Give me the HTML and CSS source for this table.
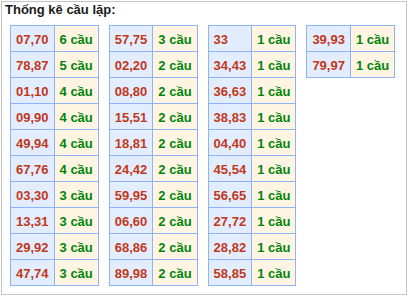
FILE: index.html
```html
<!DOCTYPE html>
<html>
<head>
<meta charset="utf-8">
<link rel="stylesheet" href="styles.css">
</head>
<body>
<div class="box">
  <div class="title">Thống kê cầu lặp:</div>
  <div class="tables">
    <table class="tk">
      <tr><td class="num">07,70</td><td class="cnt">6 cầu</td></tr>
      <tr><td class="num">78,87</td><td class="cnt">5 cầu</td></tr>
      <tr><td class="num">01,10</td><td class="cnt">4 cầu</td></tr>
      <tr><td class="num">09,90</td><td class="cnt">4 cầu</td></tr>
      <tr><td class="num">49,94</td><td class="cnt">4 cầu</td></tr>
      <tr><td class="num">67,76</td><td class="cnt">4 cầu</td></tr>
      <tr><td class="num">03,30</td><td class="cnt">3 cầu</td></tr>
      <tr><td class="num">13,31</td><td class="cnt">3 cầu</td></tr>
      <tr><td class="num">29,92</td><td class="cnt">3 cầu</td></tr>
      <tr><td class="num">47,74</td><td class="cnt">3 cầu</td></tr>
    </table>
    <table class="tk">
      <tr><td class="num">57,75</td><td class="cnt">3 cầu</td></tr>
      <tr><td class="num">02,20</td><td class="cnt">2 cầu</td></tr>
      <tr><td class="num">08,80</td><td class="cnt">2 cầu</td></tr>
      <tr><td class="num">15,51</td><td class="cnt">2 cầu</td></tr>
      <tr><td class="num">18,81</td><td class="cnt">2 cầu</td></tr>
      <tr><td class="num">24,42</td><td class="cnt">2 cầu</td></tr>
      <tr><td class="num">59,95</td><td class="cnt">2 cầu</td></tr>
      <tr><td class="num">06,60</td><td class="cnt">2 cầu</td></tr>
      <tr><td class="num">68,86</td><td class="cnt">2 cầu</td></tr>
      <tr><td class="num">89,98</td><td class="cnt">2 cầu</td></tr>
    </table>
    <table class="tk">
      <tr><td class="num">33</td><td class="cnt">1 cầu</td></tr>
      <tr><td class="num">34,43</td><td class="cnt">1 cầu</td></tr>
      <tr><td class="num">36,63</td><td class="cnt">1 cầu</td></tr>
      <tr><td class="num">38,83</td><td class="cnt">1 cầu</td></tr>
      <tr><td class="num">04,40</td><td class="cnt">1 cầu</td></tr>
      <tr><td class="num">45,54</td><td class="cnt">1 cầu</td></tr>
      <tr><td class="num">56,65</td><td class="cnt">1 cầu</td></tr>
      <tr><td class="num">27,72</td><td class="cnt">1 cầu</td></tr>
      <tr><td class="num">28,82</td><td class="cnt">1 cầu</td></tr>
      <tr><td class="num">58,85</td><td class="cnt">1 cầu</td></tr>
    </table>
    <table class="tk">
      <tr><td class="num">39,93</td><td class="cnt">1 cầu</td></tr>
      <tr><td class="num">79,97</td><td class="cnt">1 cầu</td></tr>
    </table>
  </div>
</div>
</body>
</html>
```

FILE: styles.css
```css
html, body {
  margin: 0;
  padding: 0;
  background: #ffffff;
}

body {
  font-family: "Liberation Sans", Arial, sans-serif;
}

.box {
  margin: 1px 0 0 1px;
  width: 406px;
  height: 294px;
  box-sizing: border-box;
  border: 1px solid #c4c4c4;
  background: #ffffff;
}

.title {
  font-size: 13px;
  font-weight: bold;
  line-height: 15px;
  color: #1a1a1a;
  padding: 0 0 0 3px;
}

.tables {
  display: flex;
  align-items: flex-start;
  gap: 10px;
  padding: 8px 0 0 8px;
}

.tk {
  border-collapse: collapse;
  font-size: 13px;
  font-weight: bold;
}

.tk td {
  border: 1px solid #8fb3f7;
  height: 26px;
  box-sizing: border-box;
  padding: 2px 5px 0 5px;
  line-height: 23px;
  text-align: left;
  white-space: nowrap;
}

.tk .num {
  background: #e2edff;
  color: #c2381a;
  width: 43px;
}

.tk .cnt {
  background: #fff5e2;
  color: #00850c;
  width: 44px;
}
```
